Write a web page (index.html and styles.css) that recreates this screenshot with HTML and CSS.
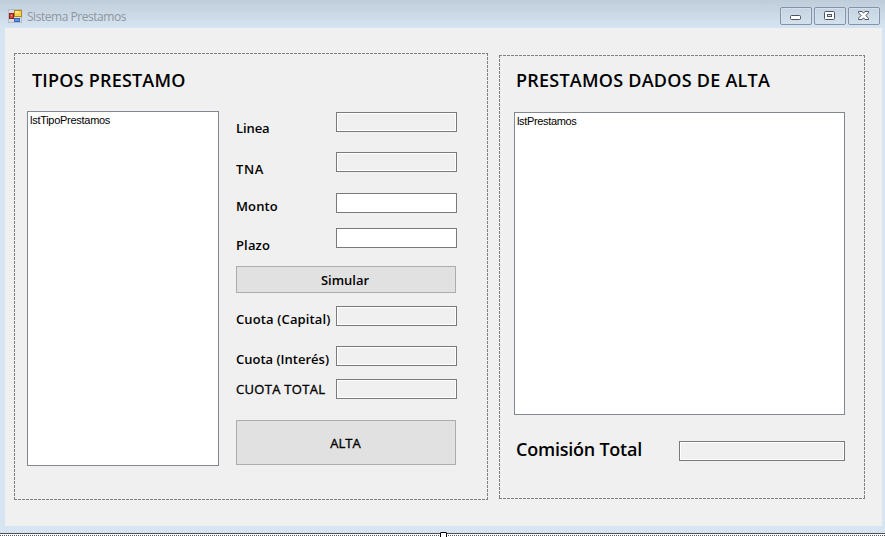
FILE: index.html
```html
<!DOCTYPE html>
<html lang="es">
<head>
<meta charset="utf-8">
<title>Sistema Prestamos</title>
<link rel="stylesheet" href="styles.css">
</head>
<body>
<main class="window">
  <header class="titlebar">
    <svg class="app-icon" width="14" height="14" viewBox="0 0 14 14">
      <rect x=".5" y=".5" width="13" height="13" fill="#d4dce5" stroke="#b3bdca"/>
      <rect x="1.5" y="4.5" width="4" height="5" fill="#d64a3e" stroke="#8b2420"/>
      <rect x="3" y="6" width="1" height="1" fill="#f6b7a4"/>
      <rect x="6.5" y="1.5" width="7" height="6" fill="#fbd24c" stroke="#b58518"/>
      <rect x="7" y="2" width="4" height="2" fill="#ffe994"/>
      <rect x="6.5" y="9.5" width="5" height="3" fill="#5b92ec" stroke="#3a66b8"/>
    </svg>
    <span class="title">Sistema Prestamos</span>
    <div class="controls">
      <span class="control"><svg width="12" height="10" viewBox="0 0 12 10"><rect x=".5" y="4.500" width="10" height="4" rx="1" fill="#fff" stroke="#4b5360"/></svg></span>
      <span class="control"><svg width="12" height="10" viewBox="0 0 12 10"><rect x=".5" y=".5" width="10" height="8" rx="1" fill="#fff" stroke="#4b5360"/><rect x="3.500" y="3.500" width="4" height="2" fill="#dfe6ee" stroke="#4b5360"/></svg></span>
      <span class="control"><svg width="12" height="10" viewBox="0 0 12 10"><path d="M.5.5h3.600L5.500 2.200 6.900.5h3.600v1.300L7.800 4.500l2.700 2.700v1.300H6.900L5.500 6.800 4.100 8.500H.5V7.200l2.700-2.700L.5 1.800z" fill="#fff" stroke="#4b5360"/></svg></span>
    </div>
  </header>
  <div class="client">
    <section class="panel panel-types">
      <h1 class="heading heading-types">TIPOS PRESTAMO</h1>
      <div class="columns">
        <div class="listbox list-types">lstTipoPrestamos</div>
        <form class="form">
          <div class="row line"><label>Linea</label><input readonly></div>
          <div class="row tna"><label>TNA</label><input readonly></div>
          <div class="row amount"><label>Monto</label><input></div>
          <div class="row term"><label>Plazo</label><input></div>
          <button class="button simulate" type="button">Simular</button>
          <div class="row capital"><label>Cuota (Capital)</label><input readonly></div>
          <div class="row interest"><label>Cuota (Interés)</label><input readonly></div>
          <div class="row total"><label>CUOTA TOTAL</label><input readonly></div>
          <button class="button submit" type="button">ALTA</button>
        </form>
      </div>
    </section>
    <section class="panel panel-loans">
      <h1 class="heading heading-loans">PRESTAMOS DADOS DE ALTA</h1>
      <div class="listbox list-loans">lstPrestamos</div>
      <div class="commission"><h2 class="heading heading-commission">Comisión Total</h2><input readonly></div>
    </section>
  </div>
</main>
<div class="selection"><span class="handle"></span></div>
</body>
</html>
```

FILE: styles.css
```css
* { box-sizing: border-box; }
body {
  margin: 0;
  height: 537px;
  overflow: hidden;
  background: #fff;
  color: #000;
  font-family: "Open Sans", "Noto Sans", sans-serif;
}
.window { height: 533px; background: #d7e4f2; }
.titlebar {
  display: flex;
  height: 28px;
  padding: 7px 5px 0 8px;
  background: linear-gradient(#bfcddb, #d7e4f2);
}
.app-icon { margin-top: 2px; }
.title {
  margin: 1px 0 0 5px;
  font-size: 12px;
  line-height: 18px;
  letter-spacing: -.46px;
  color: #8f969d;
}
.controls { display: flex; gap: 2px; margin-left: auto; }
.control {
  display: flex;
  align-items: center;
  justify-content: center;
  width: 32px;
  height: 18px;
  border: 1px solid #8393ab;
  border-radius: 2px;
  box-shadow: inset 0 0 0 1px #d5e0eb;
}
.client {
  display: flex;
  align-items: flex-start;
  gap: 11px;
  width: 877px;
  height: 498px;
  margin-left: 5px;
  padding: 25px 0 0 9px;
  background: #f0f0f0;
}
.panel {
  background:
    repeating-linear-gradient(90deg, #808080 0 3px, transparent 3px 4px) top / 100% 1px no-repeat,
    repeating-linear-gradient(90deg, #808080 0 3px, transparent 3px 4px) bottom / 100% 1px no-repeat,
    repeating-linear-gradient(#808080 0 3px, transparent 3px 4px) left / 1px 100% no-repeat,
    repeating-linear-gradient(#808080 0 3px, transparent 3px 4px) right / 1px 100% no-repeat;
}
.panel-types { width: 474px; height: 447px; padding: 14px 0 0 13px; }
.panel-loans { width: 366px; height: 444px; margin-top: 2px; padding: 12px 0 0 15px; }
.heading {
  margin: 0;
  font-size: 18px;
  font-weight: 600;
  line-height: 26px;
  white-space: nowrap;
}
.heading-types { margin-left: 5px; letter-spacing: .2px; }
.heading-loans { margin-left: 2px; letter-spacing: .24px; }
.columns { display: flex; gap: 17px; margin-top: 18px; }
.listbox {
  padding: 2px;
  border: 1px solid #828790;
  background: #fff;
  font: 11px/13px "Liberation Sans", sans-serif;
  letter-spacing: -.28px;
}
.list-types { width: 192px; height: 355px; }
.list-loans { width: 331px; height: 303px; margin-top: 19px; letter-spacing: -.34px; }
.form { width: 221px; padding-top: 1px; }
.row { display: flex; align-items: flex-start; justify-content: space-between; height: 20px; }
label {
  font-size: 13px;
  font-weight: 600;
  line-height: 18px;
  letter-spacing: .13px;
  white-space: nowrap;
}
input {
  flex: none;
  width: 121px;
  height: 20px;
  margin: 0;
  padding: 0;
  border: 1px solid #7a7a7a;
  background: #fff;
}
input:read-only { background: #f0f0f0; box-shadow: inset 0 0 0 1px #fff; }
.line label { margin-top: 7px; letter-spacing: -.1px; }
.tna { margin-top: 20px; }
.tna label { margin-top: 8px; letter-spacing: .6px; }
.amount { margin-top: 21px; }
.amount label { margin-top: 4px; }
.term { margin-top: 15px; }
.term label { margin-top: 8px; }
.capital { margin-top: 13px; }
.capital label, .interest label { margin-top: 4px; }
.interest { margin-top: 20px; }
.interest label { letter-spacing: 0; }
.total { margin-top: 13px; }
.total label { margin-top: 1px; font-weight: 400; letter-spacing: .3px; -webkit-text-stroke: .35px #000; }
.button {
  display: block;
  width: 220px;
  padding: 0;
  border: 1px solid #adadad;
  background: #e1e1e1;
  color: #000;
  font: 600 13px/18px "Open Sans", "Noto Sans", sans-serif;
}
.simulate { height: 27px; padding-right: 2px; margin-top: 18px; }
.submit { height: 45px; margin-top: 21px; padding-right: 1px; font-weight: 400; -webkit-text-stroke: .35px #000; }
.commission { display: flex; justify-content: space-between; width: 331px; margin-top: 21px; }
.commission input { width: 166px; margin-top: 5px; }
.heading-commission { margin-left: 2px; letter-spacing: -.23px; }
.selection {
  position: relative;
  height: 4px;
  border-top: 1px solid #4b5056;
  background: repeating-linear-gradient(90deg, #555 0 1px, transparent 1px 2px) 0 1px / 100% 1px no-repeat #fff;
}
.handle {
  position: absolute;
  left: 440px;
  top: -2px;
  width: 7px;
  height: 7px;
  border: 1px solid #000;
  border-radius: 1px;
  background: #fff;
}
```
